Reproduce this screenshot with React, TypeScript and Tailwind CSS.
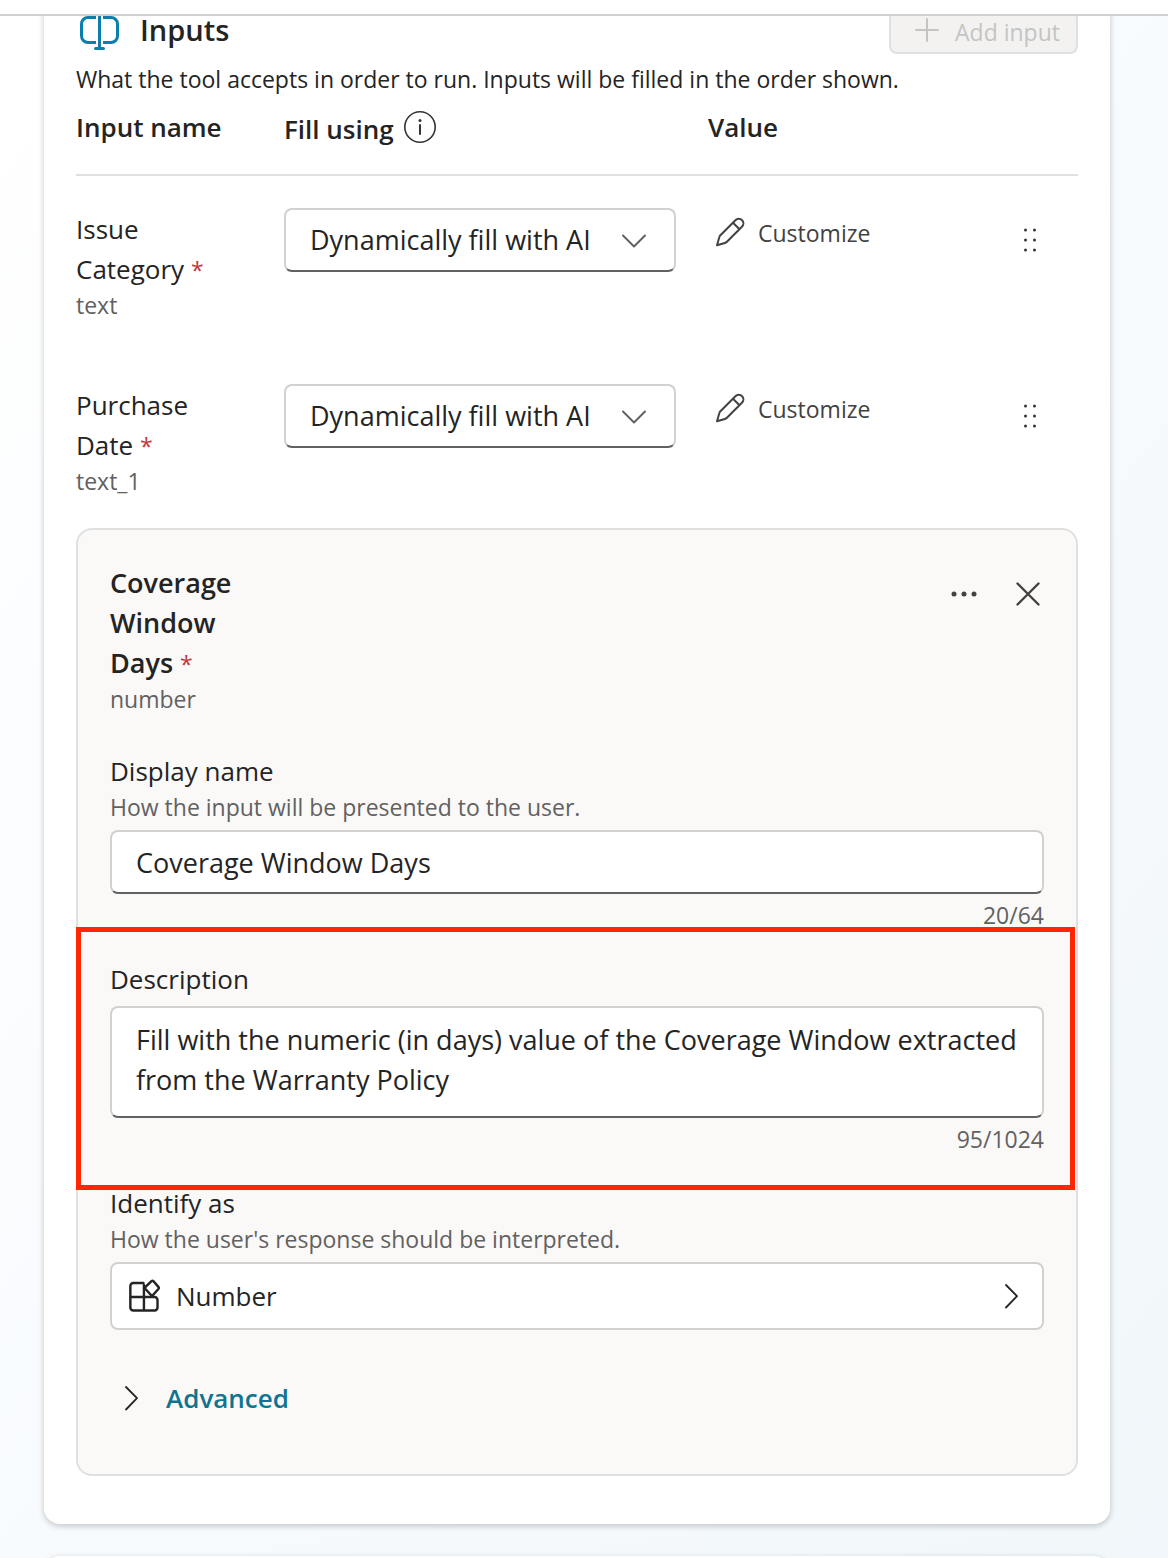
import { useState, type ReactNode } from 'react';

function Icon({ size, className = '', children }: { size: number; className?: string; children: ReactNode }) {
  return (
    <svg
      width={size}
      height={size}
      viewBox={`0 0 ${size} ${size}`}
      fill="none"
      stroke="currentColor"
      strokeWidth={2}
      strokeLinecap="round"
      strokeLinejoin="round"
      aria-hidden="true"
      className={`shrink-0 ${className}`}
    >
      {children}
    </svg>
  );
}

function InputsIcon() {
  return (
    <Icon size={40} className="text-[#0a7fab]">
      <g strokeWidth={3} strokeLinecap="butt">
        <path d="M16 5.500H8A6.500 6.500 0 0 0 1.500 12V24A6.500 6.500 0 0 0 8 30.500H16" />
        <path d="M23 5.500H31A6.500 6.500 0 0 1 37.500 12V24A6.500 6.500 0 0 1 31 30.500H23" />
        <path d="M19.500 1V36" />
        <path d="M15.500 36.500H23.500M15.500 -0.500H23.500" strokeLinecap="round" />
      </g>
    </Icon>
  );
}

function InfoIcon() {
  return (
    <Icon size={32} className="text-[#333]">
      <circle cx="16" cy="16" r="15.200" strokeWidth={1.6} />
      <path d="M16 14V23" />
      <circle cx="16" cy="9.500" r="1.500" fill="currentColor" stroke="none" />
    </Icon>
  );
}

function PencilIcon() {
  return (
    <Icon size={32} className="text-[#424242]">
      <path
        strokeWidth={2}
        d="M28.100 4.200C26.300 2.400 23.300 2.400 21.400 4.300L6.400 19.300C5.800 19.900 5.400 20.600 5.200 21.400L3 29.200L10.800 27C11.600 26.800 12.300 26.400 12.900 25.800L27.900 10.800C29.800 8.900 29.900 6 28.100 4.200ZM19 6.700L25.500 13.200"
      />
    </Icon>
  );
}

function DragIcon() {
  return (
    <svg width="20" height="28" viewBox="0 0 20 28" fill="#333" aria-hidden="true">
      {[4, 14, 24].map((y) => (
        <g key={y}>
          <circle cx="5.500" cy={y} r="1.500" />
          <circle cx="14.500" cy={y} r="1.500" />
        </g>
      ))}
    </svg>
  );
}

function ChevronRight() {
  return (
    <Icon size={28} className="text-[#242424]">
      <path d="M8 3L19 14.200L8 25.500" strokeWidth={1.8} />
    </Icon>
  );
}

function AppsIcon() {
  return (
    <Icon size={36} className="text-[#242424]">
      <g strokeWidth={2.5} transform="translate(1 0)">
        <path d="M18.500 5H8A3 3 0 0 0 5 8V29.500A3 3 0 0 0 8 32.500H30A3 3 0 0 0 33 29.500V22A3 3 0 0 0 30 19H5M19 32.500V7" transform="translate(0.500 0) scale(0.970 1)" />
        <path d="M26.500 3.200Q27.500 2.400 28.500 3.200L33.400 8.900Q34.200 10 33.400 11L28 17Q27 17.800 26 17L20.500 11Q19.700 10 20.500 8.900Z" />
      </g>
    </Icon>
  );
}

const Required = () => <span className="text-[23px] leading-none font-normal text-[#c2363c]">*</span>;

const hint = 'text-[23px] leading-8 text-[#616161]';
const field =
  'block w-full rounded-lg border-2 border-[#d1d1d1] border-b-[#616161] bg-white px-6 text-[27px] leading-10 text-[#242424]';

function InputRow({ name, type, last = false }: { name: string; type: string; last?: boolean }) {
  return (
    <tr className="align-top">
      <td className={last ? 'h-36 p-0' : 'h-44 p-0'}>
        <div className="w-36 pt-px leading-10">
          {name} <Required />
        </div>
        <div className={hint}>{type}</div>
      </td>
      <td className="p-0 pr-8">
        <div className="grid items-center">
          <select
            aria-label={`${name} fill using`}
            className={`${field} col-start-1 row-start-1 h-16 appearance-none`}
          >
            <option>Dynamically fill with AI</option>
          </select>
          <Icon size={28} className="pointer-events-none col-start-1 row-start-1 mr-7 justify-self-end text-[#616161]">
            <path d="M3 9.500L14 20.500L25 9.500" />
          </Icon>
        </div>
      </td>
      <td className="p-0 pl-1.5">
        <button type="button" className="flex h-12 items-center gap-3 text-[23px] text-[#424242]">
          <PencilIcon />
          <span className="pt-0.5">Customize</span>
        </button>
      </td>
      <td className="p-0">
        <button type="button" aria-label={`Reorder ${name}`} className="flex h-16 w-full items-center justify-center">
          <DragIcon />
        </button>
      </td>
    </tr>
  );
}

export default function App() {
  const [displayName, setDisplayName] = useState('Coverage Window Days');
  const [description, setDescription] = useState(
    'Fill with the numeric (in days) value of the Coverage Window extracted from the Warranty Policy',
  );

  return (
    <div
      className="flex h-screen flex-col overflow-hidden bg-white text-[26px] text-[#242424]"
      style={{ fontFamily: '"Open Sans", "Noto Sans", sans-serif' }}
    >
      <header className="h-4 shrink-0 border-b-2 border-[#d1d1d1] bg-white" />
      <main className="min-h-0 flex-1 overflow-hidden bg-linear-to-br from-white via-[#f8fbfe] to-[#f1f7fa] pr-[58px] pl-11">
        <section className="-mt-5 rounded-2xl bg-white px-8 pt-3.5 pb-12 shadow-[0_2px_6px_rgba(0,0,0,0.22)]">
          <div className="flex h-11 items-center justify-between">
            <h2 className="flex items-center gap-5 pl-1 text-[29px] leading-9 font-semibold">
              <InputsIcon />
              <span className="pb-1">Inputs</span>
            </h2>
            <button
              type="button"
              disabled
              className="flex h-11 items-center gap-3 rounded-lg border-2 border-[#e0e0e0] bg-[#f3f2f1] pr-4 pl-5 text-[23px] text-[#c4c4c4]"
            >
              <Icon size={32}>
                <path d="M5 14H27M16 3V25" />
              </Icon>
              Add input
            </button>
          </div>
          <p className="mt-[9px] text-[23px] leading-8">
            What the tool accepts in order to run. Inputs will be filled in the order shown.
          </p>

          <table className="w-full table-fixed border-collapse">
            <colgroup>
              <col className="w-[208px]" />
              <col className="w-[424px]" />
              <col />
              <col className="w-24" />
            </colgroup>
            <thead>
              <tr className="h-20 border-b-2 border-[#e0e0e0] text-left align-top font-semibold">
                <th className="p-0 leading-16 font-semibold">Input name</th>
                <th className="p-0 font-semibold">
                  <div className="flex h-16 items-center gap-2.5">
                    <span className="pt-1">Fill using</span>
                    <button type="button" aria-label="About fill using">
                      <InfoIcon />
                    </button>
                  </div>
                </th>
                <th className="p-0 leading-16 font-semibold">Value</th>
                <th className="p-0" aria-label="Reorder" />
              </tr>
            </thead>
            <tbody>
              <tr aria-hidden="true">
                <td colSpan={4} className="h-[33px] p-0" />
              </tr>
              <InputRow name="Issue Category" type="text" />
              <InputRow name="Purchase Date" type="text_1" last />
            </tbody>
          </table>

          <div className="rounded-2xl border-2 border-[#e0e0e0] bg-[#faf9f8] px-8 pt-8 pb-14">
            <div className="flex items-start justify-between">
              <div>
                <h3 className="w-36 pt-px text-[27px] leading-10 font-semibold">
                  Coverage Window Days <Required />
                </h3>
                <div className={hint}>number</div>
              </div>
              <div className="flex text-[#424242]">
                <button type="button" aria-label="More options" className="flex size-16 items-center justify-center">
                  <svg width="28" height="28" viewBox="0 0 28 28" fill="currentColor" aria-hidden="true">
                    <circle cx="4" cy="14" r="2.500" />
                    <circle cx="14" cy="14" r="2.500" />
                    <circle cx="24" cy="14" r="2.500" />
                  </svg>
                </button>
                <button type="button" aria-label="Close" className="-mr-4 flex size-16 items-center justify-center">
                  <Icon size={28}>
                    <path d="M3.500 3.500L24.500 24.500M24.500 3.500L3.500 24.500" strokeWidth={2.4} />
                  </Icon>
                </button>
              </div>
            </div>

            <div className="mt-9">
              <label htmlFor="display-name" className="block leading-10">
                Display name
              </label>
              <div className={hint}>How the input will be presented to the user.</div>
              <input
                id="display-name"
                value={displayName}
                onChange={(e) => setDisplayName(e.target.value)}
                className={`${field} mt-[7px] h-16`}
              />
              <div className={`${hint} mt-[5px] text-right`}>{displayName.length}/64</div>
            </div>

            <div className="relative mt-7">
              <label htmlFor="description" className="block leading-10">
                Description
              </label>
              <textarea
                id="description"
                rows={2}
                value={description}
                onChange={(e) => setDescription(e.target.value)}
                className={`${field} mt-[7px] h-28 resize-none overflow-hidden py-3`}
              />
              <div className={`${hint} mt-[5px] text-right`}>{description.length}/1024</div>
              <div className="pointer-events-none absolute -top-8 -right-[31px] -bottom-[35px] -left-[34px] border-5 border-[#ff2600]" />
            </div>

            <div className="mt-7">
              <div className="leading-10">Identify as</div>
              <div className={hint}>How the user's response should be interpreted.</div>
              <button
                type="button"
                className="mt-[7px] flex h-17 w-full items-center gap-3 rounded-lg border-2 border-[#d1d1d1] bg-white pr-4 pl-3"
              >
                <AppsIcon />
                <span className="flex-1 pl-1 text-left">Number</span>
                <ChevronRight />
              </button>
            </div>

            <button
              type="button"
              className="mt-12 flex items-center gap-5 pl-2 leading-10 font-semibold text-[#0f748f]"
            >
              <ChevronRight />
              Advanced
            </button>
          </div>
        </section>
        <section className="mt-8 h-16 rounded-2xl bg-white shadow-[0_2px_6px_rgba(0,0,0,0.22)]" />
      </main>
    </div>
  );
}
